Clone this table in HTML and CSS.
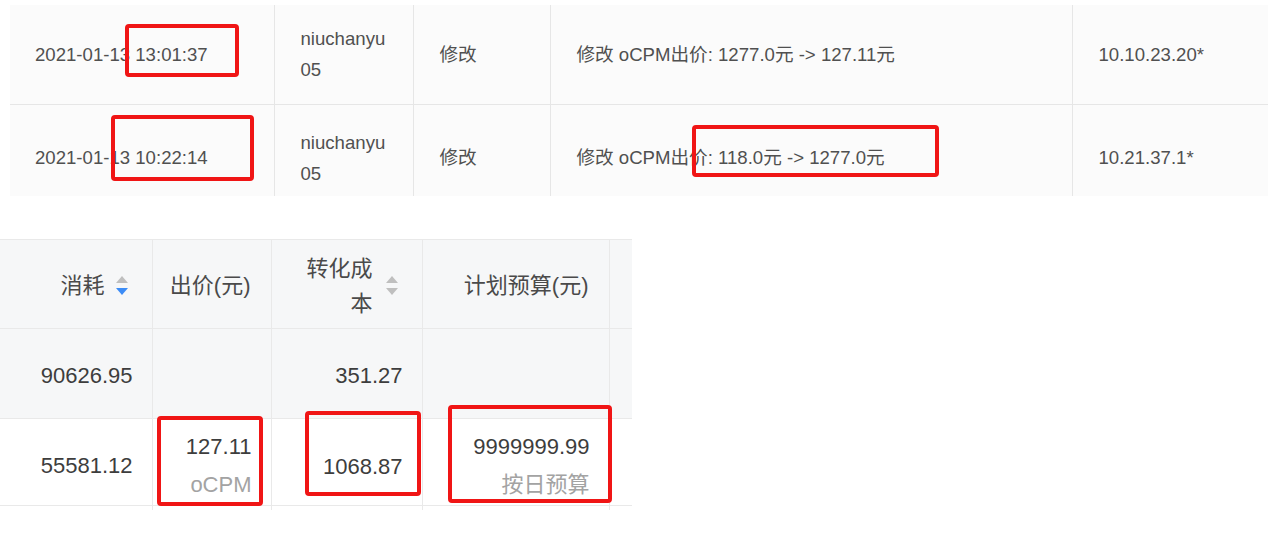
FILE: index.html
```html
<!DOCTYPE html>
<html lang="zh-CN">
<head>
<meta charset="utf-8">
<title>操作日志与计划列表</title>
<link rel="stylesheet" href="styles.css">
</head>
<body>
<div class="page">
  <div class="log-card">
    <table class="log">
      <colgroup>
        <col class="c-time"><col class="c-user"><col class="c-act"><col class="c-detail"><col class="c-ip">
      </colgroup>
      <tbody>
        <tr class="r1">
          <td class="first">2021-01-13 13:01:37</td>
          <td class="user">niuchanyu05</td>
          <td>修改</td>
          <td>修改 oCPM出价: 1277.0元 -&gt; 127.11元</td>
          <td>10.10.23.20*</td>
        </tr>
        <tr class="r2">
          <td class="first">2021-01-13 10:22:14</td>
          <td class="user">niuchanyu05</td>
          <td>修改</td>
          <td>修改 oCPM出价: 118.0元 -&gt; 1277.0元</td>
          <td>10.21.37.1*</td>
        </tr>
      </tbody>
    </table>
  </div>

  <div class="plan-card">
    <table class="plan">
      <colgroup>
        <col class="p1"><col class="p2"><col class="p3"><col class="p4"><col class="p5">
      </colgroup>
      <thead>
        <tr>
          <th>
            <div class="th-inner">
              <span class="th-title">消耗</span>
              <svg class="sorter" viewBox="0 0 12 22" width="12" height="22" aria-hidden="true">
                <path d="M6 1 L12 8 L0 8 Z" fill="#bfbfbf"/>
                <path d="M0 13 L12 13 L6 20 Z" fill="#3c8cf6"/>
              </svg>
            </div>
          </th>
          <th><div class="th-inner"><span class="th-title">出价(元)</span></div></th>
          <th class="th-wrap">
            <div class="th-inner">
              <span class="th-title narrow">转化成本</span>
              <svg class="sorter" viewBox="0 0 12 22" width="12" height="22" aria-hidden="true">
                <path d="M6 1 L12 8 L0 8 Z" fill="#bfbfbf"/>
                <path d="M0 13 L12 13 L6 20 Z" fill="#bfbfbf"/>
              </svg>
            </div>
          </th>
          <th><div class="th-inner"><span class="th-title">计划预算(元)</span></div></th>
          <th></th>
        </tr>
      </thead>
      <tbody>
        <tr class="grey">
          <td>90626.95</td>
          <td></td>
          <td>351.27</td>
          <td></td>
          <td></td>
        </tr>
        <tr class="main">
          <td>55581.12</td>
          <td><div>127.11</div><div class="sub">oCPM</div></td>
          <td class="low">1068.87</td>
          <td><div>9999999.99</div><div class="sub">按日预算</div></td>
          <td></td>
        </tr>
        <tr class="tail">
          <td></td><td></td><td></td><td></td><td></td>
        </tr>
      </tbody>
    </table>
  </div>

  <div class="mark m1"></div>
  <div class="mark m2"></div>
  <div class="mark m3"></div>
  <div class="mark m4"></div>
  <div class="mark m5"></div>
  <div class="mark m6"></div>
</div>
</body>
</html>
```

FILE: styles.css
```css
* {
  box-sizing: border-box;
}

html, body {
  margin: 0;
  padding: 0;
  background: #ffffff;
}

.page {
  position: relative;
  width: 1268px;
  height: 535px;
  overflow: hidden;
  background: #ffffff;
}

/* ---------- operation log (top) ---------- */
.log-card {
  margin: 5px 0 0 10px;
  width: 1258px;
  height: 191px;
  overflow: hidden;
  background: #fbfbfb;
}

.log {
  width: 1258px;
  table-layout: fixed;
  border-collapse: collapse;
  font-family: "Liberation Sans", "Noto Sans CJK SC", sans-serif;
  font-size: 18.6px;
  line-height: 31px;
  color: #505050;
}

.log .c-time { width: 264px; }
.log .c-user { width: 139px; }
.log .c-act { width: 137px; }
.log .c-detail { width: 522px; }
.log .c-ip { width: 196px; }

.log td {
  padding: 0 26px;
  vertical-align: middle;
  border-left: 1px solid #e6e6e6;
  white-space: nowrap;
}

.log td.first {
  border-left: none;
  padding-left: 25px;
}

.log td.user {
  white-space: normal;
  word-break: break-all;
  padding-right: 24px;
}

.log .r1 td {
  height: 99px;
  border-bottom: 1px solid #e6e6e6;
}

.log .r2 td {
  height: 107px;
}

/* ---------- plan list (bottom) ---------- */
.plan-card {
  margin-top: 43px;
  width: 632px;
  height: 271px;
  overflow: hidden;
}

.plan {
  width: 700px;
  table-layout: fixed;
  border-collapse: collapse;
  font-family: "Liberation Sans", "Noto Sans CJK SC", sans-serif;
  font-size: 22px;
  line-height: 35px;
  color: #3d3d3d;
}

.plan .p1 { width: 152px; }
.plan .p2 { width: 119px; }
.plan .p3 { width: 151px; }
.plan .p4 { width: 187px; }
.plan .p5 { width: 91px; }

.plan th,
.plan td {
  border: 1px solid #e9e9e9;
  border-left-color: #e6e6e6;
  text-align: right;
  vertical-align: middle;
  padding: 0 19px 0 10px;
}

.plan tr > :first-child {
  border-left: none;
}

.plan thead th {
  height: 89px;
  background: #f6f7f8;
  font-weight: normal;
  color: #4a4a4a;
  padding-right: 20px;
  padding-top: 3px;
}

.th-inner {
  display: flex;
  justify-content: flex-end;
  align-items: center;
}

.th-title {
  display: block;
}

.th-title.narrow {
  max-width: 70px;
  text-align: right;
}

.plan thead th:first-child,
.plan thead th.th-wrap {
  padding-right: 24px;
}

.sorter {
  flex: none;
  margin-left: 11px;
  display: block;
}

.th-wrap .sorter {
  margin-left: 13px;
}

.plan tbody tr.grey td {
  height: 90px;
  background: #f6f7f8;
  padding-top: 4px;
}

.plan tbody tr td {
  height: 87px;
  background: #ffffff;
}

.plan tbody tr.main td {
  padding-top: 6px;
}

.plan td .sub {
  color: #a3a3a3;
  margin-top: 3px;
}

.plan tbody tr.main td.low {
  padding-top: 8px;
}

.plan tbody tr.tail td {
  height: 40px;
}

/* ---------- red annotation boxes ---------- */
.mark {
  position: absolute;
  border: 4px solid #f01515;
  border-radius: 4px;
}

.m1 { left: 125px; top: 24px;  width: 114px; height: 53px; }
.m2 { left: 111px; top: 115px; width: 143px; height: 66px; }
.m3 { left: 692px; top: 125px; width: 247px; height: 52px; }
.m4 { left: 157px; top: 416px; width: 106px; height: 90px; }
.m5 { left: 305px; top: 411px; width: 116px; height: 85px; }
.m6 { left: 448px; top: 405px; width: 164px; height: 98px; }
```
